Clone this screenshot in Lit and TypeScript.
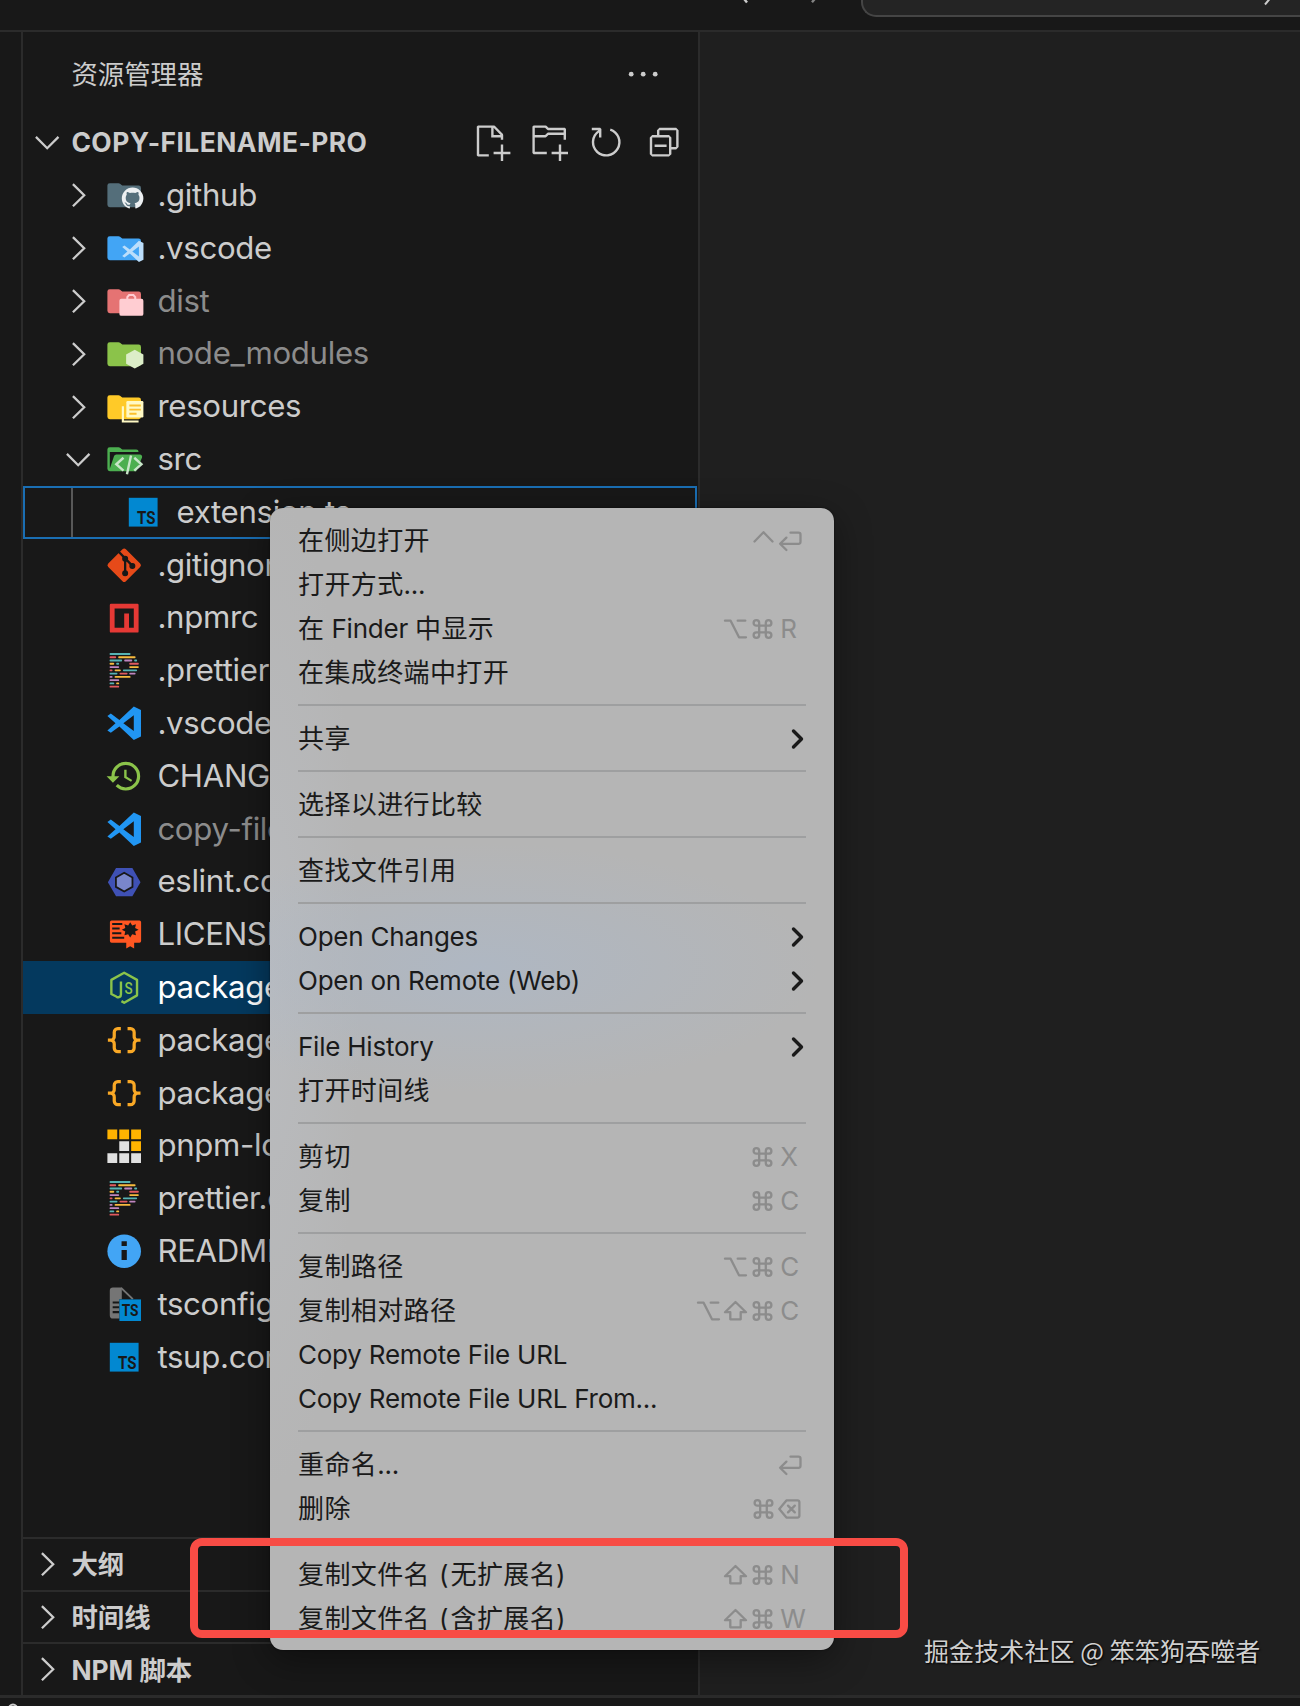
import { LitElement, css, html, svg, nothing, type TemplateResult } from "lit";
import { customElement, property } from "lit/decorators.js";
import { classMap } from "lit/directives/class-map.js";

interface TreeNode {
  name: string;
  icon: string;
  folder?: "open" | "closed";
  muted?: boolean;
  nested?: boolean;
  focused?: boolean;
  selected?: boolean;
}

interface MenuItem {
  label: string;
  keys?: string[];
  submenu?: boolean;
}

const tree: TreeNode[] = [
  { name: ".github", icon: "folder-github", folder: "closed" },
  { name: ".vscode", icon: "folder-vscode", folder: "closed" },
  { name: "dist", icon: "folder-dist", folder: "closed", muted: true },
  { name: "node_modules", icon: "folder-node", folder: "closed", muted: true },
  { name: "resources", icon: "folder-resource", folder: "closed" },
  { name: "src", icon: "folder-src", folder: "open" },
  { name: "extension.ts", icon: "typescript", nested: true, focused: true },
  { name: ".gitignore", icon: "git" },
  { name: ".npmrc", icon: "npm" },
  { name: ".prettierrc", icon: "prettier" },
  { name: ".vscodeignore", icon: "vscode" },
  { name: "CHANGELOG.md", icon: "changelog" },
  { name: "copy-filename-pro.vsix", icon: "vscode", muted: true },
  { name: "eslint.config.mjs", icon: "eslint" },
  { name: "LICENSE", icon: "license" },
  { name: "package.json", icon: "nodejs", selected: true },
  { name: "package.nls.json", icon: "json" },
  { name: "package.nls.zh-cn.json", icon: "json" },
  { name: "pnpm-lock.yaml", icon: "pnpm" },
  { name: "prettier.config.mjs", icon: "prettier" },
  { name: "README.md", icon: "readme" },
  { name: "tsconfig.json", icon: "tsconfig" },
  { name: "tsup.config.ts", icon: "typescript" },
];

const menu: MenuItem[][] = [
  [
    { label: "在侧边打开", keys: ["ctrl", "return"] },
    { label: "打开方式..." },
    { label: "在 Finder 中显示", keys: ["option", "cmd", "R"] },
    { label: "在集成终端中打开" },
  ],
  [{ label: "共享", submenu: true }],
  [{ label: "选择以进行比较" }],
  [{ label: "查找文件引用" }],
  [
    { label: "Open Changes", submenu: true },
    { label: "Open on Remote (Web)", submenu: true },
  ],
  [{ label: "File History", submenu: true }, { label: "打开时间线" }],
  [
    { label: "剪切", keys: ["cmd", "X"] },
    { label: "复制", keys: ["cmd", "C"] },
  ],
  [
    { label: "复制路径", keys: ["option", "cmd", "C"] },
    { label: "复制相对路径", keys: ["option", "shift", "cmd", "C"] },
    { label: "Copy Remote File URL" },
    { label: "Copy Remote File URL From..." },
  ],
  [
    { label: "重命名...", keys: ["return"] },
    { label: "删除", keys: ["cmd", "delete"] },
  ],
  [
    { label: "复制文件名 (无扩展名)", keys: ["shift", "cmd", "N"] },
    { label: "复制文件名 (含扩展名)", keys: ["shift", "cmd", "W"] },
  ],
];

const folderPath =
  "m13.844 7.536-1.288-1.072A2 2 0 0 0 11.276 6H4a2 2 0 0 0-2 2v16a2 2 0 0 0 2 2h24a2 2 0 0 0 2-2V10a2 2 0 0 0-2-2H15.124a2 2 0 0 1-1.28-.464";
const folderOpenPath =
  "M28.967 12H9.442a2 2 0 0 0-1.898 1.368L4 24V10h24a2 2 0 0 0-2-2H15.124a2 2 0 0 1-1.28-.464l-1.288-1.072A2 2 0 0 0 11.276 6H4a2 2 0 0 0-2 2v16a2 2 0 0 0 2 2h22l4.805-11.212A2 2 0 0 0 28.967 12";
const vscodePath =
  "M24.003 2 12 13.303 4.84 8 2 10l6.772 6L2 22l2.84 2L12 18.702 24.003 30 30 27.087V4.913ZM24 9.434v13.132L15.289 16Z";
const githubPath =
  "M12 2A10 10 0 0 0 2 12c0 4.42 2.87 8.17 6.84 9.5.5.08.66-.23.66-.5v-1.69c-2.77.6-3.36-1.34-3.36-1.34-.46-1.16-1.11-1.47-1.11-1.47-.91-.62.07-.6.07-.6 1 .07 1.53 1.03 1.53 1.03.87 1.52 2.34 1.07 2.91.83.09-.65.35-1.09.63-1.34-2.22-.25-4.55-1.11-4.55-4.92 0-1.11.38-2 1.03-2.71-.1-.25-.45-1.29.1-2.64 0 0 .84-.27 2.75 1.02.79-.22 1.65-.33 2.5-.33s1.71.11 2.5.33c1.91-1.29 2.75-1.02 2.75-1.02.55 1.35.2 2.39.1 2.64.65.71 1.03 1.6 1.03 2.71 0 3.82-2.34 4.66-4.57 4.91.36.31.69.92.69 1.85V21c0 .27.16.59.67.5C19.14 20.16 22 16.42 22 12A10 10 0 0 0 12 2";

const TEAL = "#56b3b4";
const RED = "#e05a5f";
const YELLOW = "#f7ba3e";
const PURPLE = "#bf85bf";

// [start, end, colour] of each dash, row by row
const prettierRows: [number, number, string][][] = [
  [[3.8, 21.3, TEAL]],
  [[3.8, 9.3, RED], [11, 25.5, YELLOW]],
  [[3.8, 14.3, TEAL], [16, 22.7, PURPLE], [24.3, 26.8, TEAL]],
  [[3.8, 7.7, YELLOW], [9.3, 11.8, TEAL], [20.2, 28.2, RED]],
  [[3.8, 11.8, PURPLE], [20.2, 28.2, YELLOW]],
  [[3.8, 6.3, RED], [8, 13.2, YELLOW], [14.9, 26.8, TEAL]],
  [[3.8, 10.4, TEAL], [12.1, 18.8, RED], [20.2, 25.5, PURPLE]],
  [[3.8, 6.3, PURPLE], [8, 21.3, YELLOW]],
  [[3.8, 11.8, PURPLE]],
  [[3.8, 7.7, TEAL], [9.3, 11.8, YELLOW]],
  [[3.8, 11.8, RED]],
];

const folder = (color: string) => svg`<path fill=${color} d=${folderPath} />`;

const icons: Record<string, unknown> = {
  "folder-github": svg`${folder("#546e7a")}
    <path fill="#eceff1" transform="translate(12.2 7.8) scale(.9)" d=${githubPath} />`,
  "folder-vscode": svg`${folder("#42a5f5")}
    <path fill="#bbdefb" transform="translate(13.1 8.6) scale(.632)" d=${vscodePath} />`,
  "folder-dist": svg`${folder("#e57373")}
    <path fill="none" stroke="#ffcdd2" stroke-width="1.7" d="M18.6 15v-2.4l1.5-1.7h3.6l1.5 1.7V15" />
    <rect fill="#ffcdd2" x="12" y="14" width="20" height="14.2" rx="1.6" />`,
  "folder-node": svg`${folder("#8bc34a")}
    <path fill="#dcedc8" d="M24.8 12.3 32 16.2v7.8l-7.2 4-7.2-4v-7.8Z" />`,
  "folder-resource": svg`${folder("#ffca28")}
    <path fill="none" stroke="#fff9c4" stroke-width="1.8" d="M14.9 15.3v12.6H28" />
    <rect fill="#fff9c4" x="17.8" y="10.8" width="14.2" height="13.8" rx="1" />
    <path stroke="#fbc02d" stroke-width="1.6" d="M20.3 14.6h9.6M20.3 18h9.6M20.3 21.5h6" />`,
  "folder-src": svg`<path fill="#4caf50" d=${folderOpenPath} />
    <path fill="none" stroke="#c8e6c9" stroke-width="2" d="m15.4 14.8-6 5.4 6 5.4M24.4 14.8l6 5.4-6 5.4M21.7 12.9l-3.4 15.7" />`,
  typescript: svg`<path fill="#0288d1" d="M4 4h24v24H4z" />
    <text class="ts" x="10.8" y="25.9" font-size="15.4" textLength="15.4" lengthAdjust="spacingAndGlyphs">TS</text>`,
  git: svg`<rect fill="#e64a19" x="5.6" y="5.6" width="20.8" height="20.8" rx="2" transform="rotate(45 16 16)" />
    <g fill="#181818" stroke="#181818">
      <path fill="none" stroke-width="1.9" d="m10.6 4 6.2 6.3 6.1 6.3M16.8 10v12.8" />
      <circle cx="16.8" cy="10.6" r="2" /><circle cx="22.8" cy="16.6" r="2" /><circle cx="16.8" cy="22.8" r="2" />
    </g>`,
  npm: svg`<path fill="#e53935" fill-rule="evenodd" d="M5 4h22a1 1 0 0 1 1 1v22a1 1 0 0 1-1 1H5a1 1 0 0 1-1-1V5a1 1 0 0 1 1-1Zm3 4h16v16h-4V12h-4v12H8Z" />`,
  prettier: prettierRows.map((row, i) =>
    row.map(
      ([start, end, color]) =>
        svg`<rect fill=${color} x=${start} y=${0.9 + i * 2.72} width=${end - start} height="1.5" rx=".7" />`
    )
  ),
  vscode: svg`<path fill="#2196f3" d=${vscodePath} />`,
  changelog: svg`<path fill="#8bc34a" transform="scale(1.3333)"
    d="M13.5 8H12v5l4.28 2.54.72-1.21-3.5-2.08V8M13 3a9 9 0 0 0-9 9H1l3.96 4.03L9 12H6a7 7 0 0 1 7-7 7 7 0 0 1 7 7 7 7 0 0 1-7 7c-1.93 0-3.68-.79-4.94-2.06l-1.42 1.42A8.9 8.9 0 0 0 13 21a9 9 0 0 0 9-9 9 9 0 0 0-9-9" />`,
  eslint: svg`<path fill="#3f51b5" d="M2.4 16 9.2 4.2h13.6L29.6 16l-6.8 11.8H9.2Z" />
    <path fill="#7986cb" stroke="#181818" stroke-width="1.5" d="m16 8.2 6.9 3.9v7.8L16 23.8l-6.9-3.9v-7.8Z" />`,
  license: svg`<path fill="#ff5722" d="M5.5 3.8h23.2a1.4 1.4 0 0 1 1.4 1.4v15.7a1.4 1.4 0 0 1-1.4 1.4h-4.4V27L21 25.2 17.7 27v-4.7H5.5a1.4 1.4 0 0 1-1.4-1.4V5.2a1.4 1.4 0 0 1 1.4-1.4" />
    <path stroke="#181818" stroke-width="1.7" d="M6 6.6h8.4M6 10.5h6.2M6 14.4h7.6M6 18.2h10" />
    <path fill="#181818" d="m21 5.2 1.7 2.7 3.1-1-.7 3.1 2.9 1.5-2.9 1.5.7 3.1-3.1-.9L21 18l-1.7-2.8-3.1.9.7-3.1-2.9-1.5 2.9-1.5-.7-3.1 3.1 1Z" />`,
  nodejs: svg`<path fill="none" stroke="#8bc34a" stroke-width="2" stroke-linejoin="round"
      d="M13.3 11.2v10.6c0 2.4-1.8 3-3.6 2.2l-4.4-2.3V9.9L16 3.9l10.7 6v12.9L16 29l-2.3-1.4" />
    <text class="js" x="16.2" y="21.9" font-size="14.5" textLength="6.8" lengthAdjust="spacingAndGlyphs">S</text>`,
  json: svg`<path fill="none" stroke="#f9a825" stroke-width="2.7"
    d="M13.2 6.3h-2.5a3 3 0 0 0-3 3v3.3A3 3 0 0 1 4.7 16H2.4h2.3a3 3 0 0 1 3 3.2v3.3a3 3 0 0 0 3 3h2.5M18.8 6.3h2.5a3 3 0 0 1 3 3v3.3a3 3 0 0 0 3 3.4h2.3-2.3a3 3 0 0 0-3 3.2v3.3a3 3 0 0 1-3 3h-2.5" />`,
  pnpm: svg`<path fill="#ffb300" d="M2 2h8.2v8.2H2zM11.9 2h8.2v8.2h-8.2zM21.8 2H30v8.2h-8.2zM21.8 11.9H30v8.2h-8.2z" />
    <path fill="#e0e0e0" d="M11.9 11.9h8.2v8.2h-8.2zM2 21.8h8.2V30H2zM11.9 21.8h8.2V30h-8.2zM21.8 21.8H30V30h-8.2z" />`,
  readme: svg`<circle fill="#42a5f5" cx="16" cy="16" r="14" />
    <path fill="#181818" d="M13.8 7.8h4.4v3.8h-4.4zM13.8 15h4.4v8.4h-4.4z" />`,
  tsconfig: svg`<path fill="#757575" d="M6.6 2h7.4v9.8H12V28H6.6A2.6 2.6 0 0 1 4 25.4V4.6A2.6 2.6 0 0 1 6.6 2" />
    <path fill="none" stroke="#757575" stroke-width="1.6" d="m13.4 2.4 9.8 9.4" />
    <path stroke="#181818" stroke-width="1.7" d="M6.4 14.6H12M6.4 18.6H12M6.4 22.6H12" />
    <path fill="#0288d1" d="M12 12h18v18H12z" />
    <text class="ts" x="13.9" y="25.9" font-size="13.2" textLength="14" lengthAdjust="spacingAndGlyphs">TS</text>`,
};

const actionIcons: string[] = [
  "M9.5 1.1l3.4 3.5.1.4v2h-1V6H8V2H3v11h4v1H2.5l-.5-.5v-12l.5-.5h6.7l.3.1zM9 2v3h2.9L9 2zm4 14h-1v-3H9v-1h3V9h1v3h3v1h-3v3z",
  "M14.5 2H7.71l-.85-.85L6.51 1h-5l-.5.5v11l.5.5H7v-1H1.99V6h4.49l.35-.15.86-.86H14v1.5l-.001.51h1.011V2.5L14.5 2zm-.51 2h-6.5l-.35.15-.86.86H2v-3h4.29l.85.85.36.15H14l-.01.99zM13 16h-1v-3H9v-1h3V9h1v3h3v1h-3v3z",
  "M4.681 3H2V2h3.5l.5.5V6H5V4a5 5 0 1 0 4.53-.761l.302-.954A6 6 0 1 1 4.681 3z",
  "M9 9H4v1h5V9zM5 3l1-1h7l1 1v7l-1 1h-2v2l-1 1H3l-1-1V6l1-1h2V3zm1 2h4l1 1v4h2V3H6v2zm4 1H3v7h7V6z",
];

// Modifier symbols, drawn in a 27x24 cell
const keyIcons: Record<string, unknown> = {
  ctrl: svg`<path d="m4.5 12.5 9-9.3 9 9.3" />`,
  option: svg`<path d="M3 3.7h5.6L17 20.3h7M15.7 3.7h7.6" />`,
  shift: svg`<path d="M13.5 3 3 13.2h5.3v7.1h10.4v-7.1H24Z" />`,
  cmd: svg`<path d="M10.2 8.7h6.6v6.6h-6.6ZM10.2 8.7H7.4a2.8 2.8 0 1 1 2.8-2.8ZM16.8 8.7V5.9a2.8 2.8 0 1 1 2.8 2.8ZM16.8 15.3h2.8a2.8 2.8 0 1 1-2.8 2.8ZM10.2 15.3v2.8a2.8 2.8 0 1 1-2.8-2.8Z" />`,
  return: svg`<path d="M13.5 3.7h8q2 0 2 2v7.1q0 2-2 2H3.4M9.4 8.6l-6.3 6.2 6.3 6.2" />`,
  delete: svg`<path d="M9.4 3.4h11q2 0 2 2v13.2q0 2-2 2h-11L2.3 12ZM11 8.6l6.8 6.8M17.8 8.6 11 15.4" />`,
};

function chevron(open: boolean): TemplateResult {
  return html`<svg class="twistie" viewBox="0 0 16 16">
    <path d=${open ? "m3.3 5.8 4.7 4.7 4.7-4.7" : "m5.8 3.4 4.7 4.6-4.7 4.6"} />
  </svg>`;
}

@customElement("file-tree")
export class FileTree extends LitElement {
  @property({ attribute: false }) nodes: TreeNode[] = [];

  render() {
    return this.nodes.map(
      (node) => html`<div
        class=${classMap({
          row: true,
          muted: !!node.muted,
          nested: !!node.nested,
          focused: !!node.focused,
          selected: !!node.selected,
        })}
      >
        <span class="arrow">${node.folder ? chevron(node.folder === "open") : nothing}</span>
        <svg class="icon" viewBox="0 0 32 32">${icons[node.icon]}</svg>
        <span class="name">${node.name}</span>
      </div>`
    );
  }

  static styles = css`
    :host {
      display: block;
    }

    .row {
      display: flex;
      align-items: center;
      height: 52.8px;
      box-sizing: border-box;
      padding-left: 36.3px;
      color: #cccccc;
      font-size: 31.2px;
      white-space: nowrap;
    }

    .muted {
      color: #8c8c8c;
    }

    .selected {
      background: #04395e;
      color: #fff;
    }

    .focused {
      margin-right: 1px;
      outline: 2px solid #1a6eb3;
      outline-offset: -2px;
    }

    .arrow {
      width: 45.5px;
      height: 38.4px;
    }

    .nested .arrow {
      width: 64.7px;
    }

    .nested {
      background: linear-gradient(#585858, #585858) 48px 0 / 2px 100% no-repeat;
    }

    .twistie {
      width: 38.4px;
      height: 38.4px;
      fill: none;
      stroke: #cccccc;
      stroke-width: 0.95;
    }

    .icon {
      flex: none;
      width: 38.4px;
      height: 38.4px;
      margin-right: 14.2px;
      overflow: visible;
    }

    .ts {
      font-family: Roboto, sans-serif;
      font-weight: 700;
      fill: #181818;
    }

    .js {
      font-family: Roboto, sans-serif;
      font-weight: 500;
      fill: #8bc34a;
    }

    .name {
      padding-bottom: 1px;
      letter-spacing: -0.32px;
    }
  `;
}

@customElement("context-menu")
export class ContextMenu extends LitElement {
  @property({ attribute: false }) groups: MenuItem[][] = [];

  // Latin runs are set tighter than the Chinese text around them
  private renderLabel(label: string) {
    return label
      .split(/([\x20-\x7e]+)/)
      .filter(Boolean)
      .map((run) => {
        if (/[a-z.]/i.test(run)) {
          return html`<span class="latin">${run}</span>`;
        }
        return /[()]/.test(run) ? html`<span class="paren">${run}</span>` : run;
      });
  }

  private renderKey(key: string) {
    if (!keyIcons[key]) {
      return html`<span class="letter">${key}</span>`;
    }
    return html`<svg class="key" viewBox="0 0 27 24">${keyIcons[key]}</svg>`;
  }

  render() {
    return this.groups.map(
      (group) => html`<div class="group">
        ${group.map(
          (item) => html`<div class="item">
            <span class="label">${this.renderLabel(item.label)}</span>
            ${item.keys
              ? html`<span class="keys">${item.keys.map((key) => this.renderKey(key))}</span>`
              : nothing}
            ${item.submenu
              ? html`<svg class="more" viewBox="0 0 16 24"><path d="m3.5 5 8 8-8 8" /></svg>`
              : nothing}
          </div>`
        )}
      </div>`
    );
  }

  static styles = css`
    :host {
      display: block;
      box-sizing: border-box;
      padding: 10px 28px;
      border-radius: 13px;
      background:
        radial-gradient(ellipse 340px 125px at 210px 460px, rgba(172, 184, 200, 0.7), transparent),
        radial-gradient(ellipse 90px 500px at 0 480px, rgba(188, 191, 196, 0.6), transparent), #b5b5b5;
      box-shadow:
        0 0 2px rgba(0, 0, 0, 0.6),
        0 10px 36px rgba(0, 0, 0, 0.4);
      color: #1a1a1a;
      font-size: 26px;
    }

    .group + .group {
      margin-top: 10px;
      padding-top: 10px;
      border-top: 2px solid #9e9fa0;
    }

    .item {
      display: flex;
      align-items: center;
      justify-content: space-between;
      height: 44px;
      line-height: 32px;
      white-space: pre;
      letter-spacing: 0.38px;
    }

    .label {
      display: block;
      padding-top: 2px;
    }

    .latin {
      letter-spacing: -0.23px;
    }

    .paren {
      letter-spacing: 1.9px;
    }

    .keys {
      display: flex;
      align-items: center;
      margin-right: 0.8px;
      color: #8c8c8c;
    }

    .key {
      width: 27px;
      height: 24px;
      margin-top: 1px;
      fill: none;
      stroke: #8c8c8c;
      stroke-width: 2.3;
      stroke-linejoin: round;
      stroke-linecap: round;
    }

    .key:last-child {
      margin-right: 1.4px;
    }

    .letter {
      width: 25px;
      padding: 2px 0 0 4px;
    }

    .more {
      width: 16px;
      height: 24px;
      fill: none;
      stroke: #1a1a1a;
      stroke-width: 3.4;
      stroke-linecap: round;
      stroke-linejoin: round;
    }
  `;
}

@customElement("app-root")
export class AppRoot extends LitElement {
  render() {
    return html`
      <header class="titlebar">
        <svg class="nav" viewBox="0 0 90 6">
          <path d="m0-5 6 7.6" />
          <path d="m71 2.2 6-7" opacity=".6" />
        </svg>
        <div class="search">
          <svg class="caret" viewBox="0 0 8 6"><path d="m1 4.5 5-6" /></svg>
        </div>
      </header>
      <div class="body">
        <div class="activity"></div>
        <aside class="sidebar">
          <div class="title">
            <span>资源管理器</span>
            <svg class="action" viewBox="0 0 16 16">
              <circle cx="3" cy="8" r="1" /><circle cx="8" cy="8" r="1" /><circle cx="13" cy="8" r="1" />
            </svg>
          </div>
          <div class="section workspace">
            ${chevron(true)}
            <span class="section-name">COPY-FILENAME-PRO</span>
            <div class="actions">
              ${actionIcons.map(
                (d) => html`<svg class="action" viewBox="0 0 16 16"><path d=${d} /></svg>`
              )}
            </div>
          </div>
          <file-tree class="tree" .nodes=${tree}></file-tree>
          ${["大纲", "时间线", "NPM 脚本"].map(
            (name) => html`<div class="section panel">${chevron(false)}<span>${name}</span></div>`
          )}
        </aside>
        <main class="editor"></main>
      </div>
      <footer class="statusbar">
        <svg class="remote" viewBox="0 0 12 8"><circle cx="6" cy="6" r="4.4" /></svg>
      </footer>

      <context-menu class="menu" .groups=${menu}></context-menu>
      <div class="highlight"></div>
      <div class="watermark">掘金技术社区 @ 笨笨狗吞噬者</div>
    `;
  }

  static styles = css`
    :host {
      display: flex;
      flex-direction: column;
      position: relative;
      width: 1300px;
      height: 1706px;
      overflow: hidden;
      background: #181818;
      color: #cccccc;
      font-family: Inter, "Noto Sans CJK SC", sans-serif;
    }

    .titlebar {
      display: flex;
      align-items: flex-start;
      height: 30px;
      border-bottom: 2px solid #2b2b2b;
    }

    .nav {
      width: 90px;
      height: 6px;
      margin-left: 741px;
      fill: none;
      stroke: #cccccc;
      stroke-width: 2.4;
    }

    .search {
      flex: 1;
      display: flex;
      justify-content: flex-end;
      box-sizing: border-box;
      height: 17px;
      margin-left: 30px;
      padding-right: 28px;
      border: solid #454545;
      border-width: 0 0 2px 2px;
      border-bottom-left-radius: 15px;
      background: #242424;
    }

    .caret {
      width: 8px;
      height: 6px;
      fill: none;
      stroke: #cccccc;
      stroke-width: 2;
    }

    .body {
      flex: 1;
      display: flex;
      min-height: 0;
    }

    .activity {
      width: 21px;
      border-right: 2px solid #2b2b2b;
    }

    .sidebar {
      display: flex;
      flex-direction: column;
      width: 675px;
      border-right: 2px solid #2b2b2b;
    }

    .title {
      display: flex;
      align-items: center;
      justify-content: space-between;
      height: 84.4px;
      padding: 0 36px 0 48.4px;
      font-size: 26.4px;
      line-height: 32px;
    }

    .section {
      display: flex;
      align-items: center;
      box-sizing: border-box;
      height: 52.8px;
      padding: 0 14.6px 0 5px;
      font-size: 26.4px;
      font-weight: 700;
      line-height: 32px;
    }

    .workspace {
      padding-bottom: 2.2px;
    }

    .section-name {
      letter-spacing: 0.45px;
    }

    .panel {
      height: 52.7px;
      border-top: 2px solid #2b2b2b;
    }

    .tree {
      flex: 1;
      min-height: 0;
    }

    .twistie {
      width: 38.4px;
      height: 38.4px;
      margin-right: 5px;
      fill: none;
      stroke: #cccccc;
      stroke-width: 0.95;
    }

    .actions {
      display: flex;
      gap: 19.2px;
      margin-left: auto;
    }

    .action {
      width: 38.4px;
      height: 38.4px;
      fill: #cccccc;
    }

    .editor {
      flex: 1;
      background: #1f1f1f;
    }

    .statusbar {
      height: 8px;
      border-top: 3px solid #2b2b2b;
    }

    .remote {
      display: block;
      width: 12px;
      height: 8px;
      margin: 5px 0 0 7px;
      fill: none;
      stroke: #cccccc;
      stroke-width: 2;
    }

    .menu {
      position: absolute;
      left: 270px;
      top: 508px;
      width: 564px;
      height: 1142px;
    }

    .highlight {
      position: absolute;
      left: 190px;
      top: 1538px;
      width: 718px;
      height: 100px;
      box-sizing: border-box;
      border: 8px solid #f84c45;
      border-radius: 12px;
    }

    .watermark {
      position: absolute;
      left: 924px;
      top: 1632px;
      color: #d0d0d0;
      font-family: "Noto Sans CJK SC", sans-serif;
      font-size: 25px;
      letter-spacing: 0.1px;
      line-height: 36px;
      white-space: nowrap;
      text-shadow: 1px 1px 2px #000;
    }
  `;
}

declare global {
  interface HTMLElementTagNameMap {
    "app-root": AppRoot;
    "file-tree": FileTree;
    "context-menu": ContextMenu;
  }
}
